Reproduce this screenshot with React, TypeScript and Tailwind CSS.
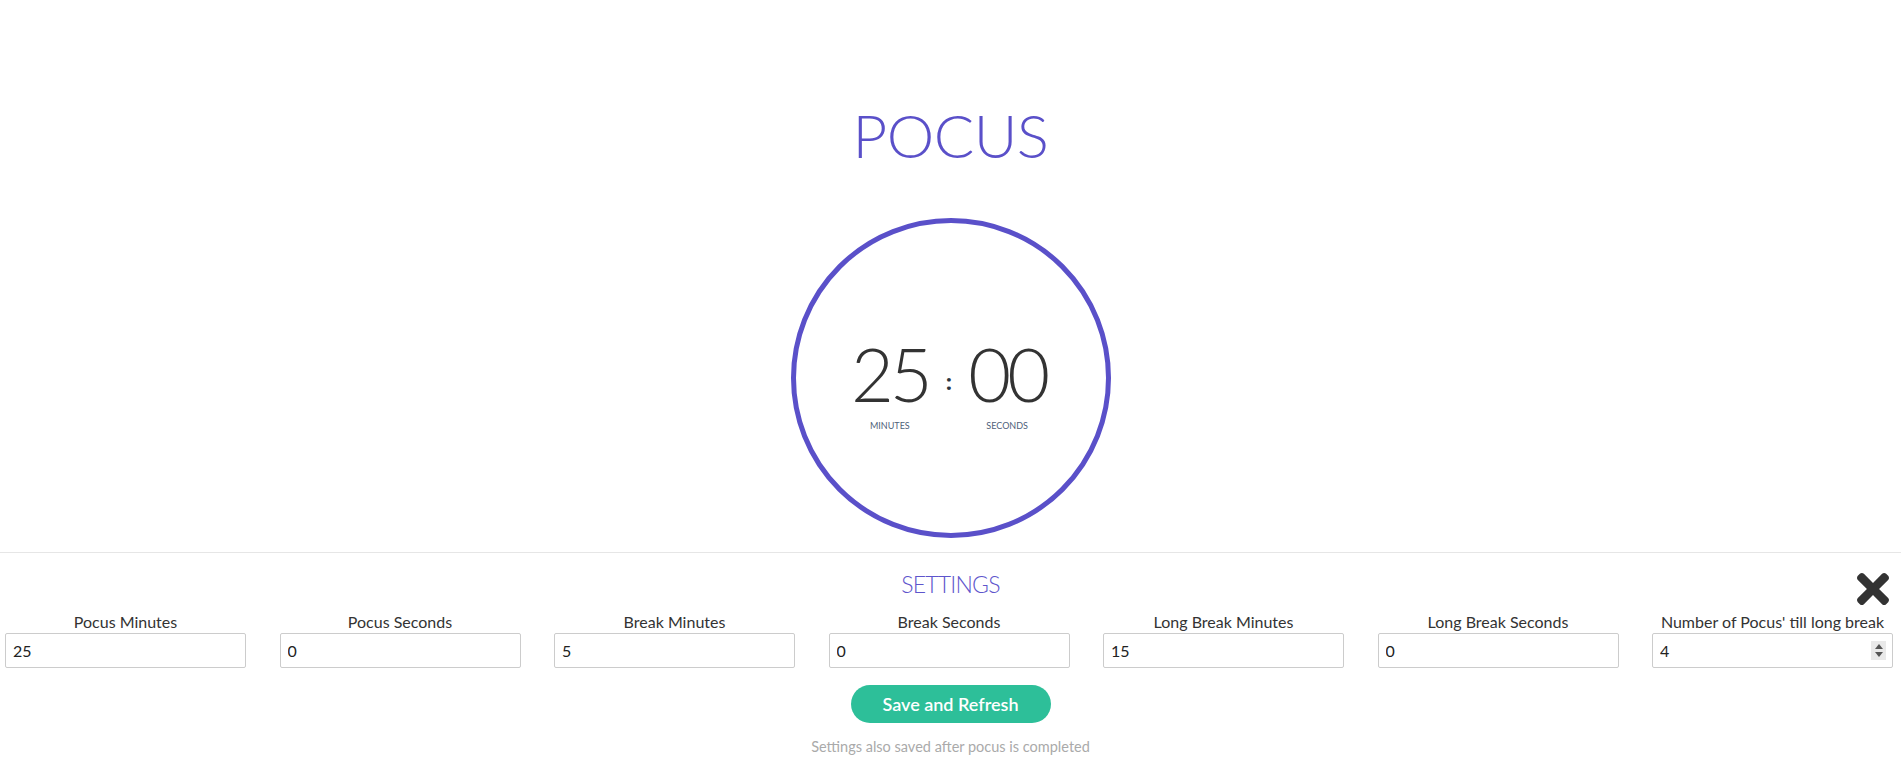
import React from "react";

const fields: { label: string; value: string }[] = [
  { label: "Pocus Minutes", value: "25" },
  { label: "Pocus Seconds", value: "0" },
  { label: "Break Minutes", value: "5" },
  { label: "Break Seconds", value: "0" },
  { label: "Long Break Minutes", value: "15" },
  { label: "Long Break Seconds", value: "0" },
  { label: "Number of Pocus' till long break", value: "4" },
];

function CloseIcon() {
  return (
    <svg width="32" height="32" viewBox="0 80 352 352" fill="#333333" aria-hidden="true">
      <path d="M242.72 256l100.07-100.07c12.28-12.28 12.28-32.19 0-44.48l-22.24-22.240c-12.28-12.28-32.19-12.28-44.48 0L176 189.28 75.93 89.21c-12.28-12.28-32.19-12.28-44.48 0L9.21 111.45c-12.28 12.28-12.28 32.19 0 44.48L109.28 256 9.21 356.07c-12.28 12.28-12.28 32.19 0 44.48l22.24 22.24c12.28 12.28 32.2 12.28 44.48 0L176 322.72l100.07 100.07c12.28 12.28 32.2 12.28 44.48 0l22.24-22.24c12.28-12.28 12.28-32.19 0-44.48L242.72 256z" />
    </svg>
  );
}

export default function App() {
  return (
    <div className="min-h-screen bg-white font-['Lato',sans-serif] text-[#333]">
      <div className="flex flex-col items-center">
        <h1 className="mt-[105px] text-[60px] leading-none font-light text-[#5a50c9] tracking-[-0.5px]">
          POCUS
        </h1>
        <div className="mt-[53px] w-[320px] h-[320px] rounded-full border-[5px] border-[#5a50c9] flex flex-col items-center pt-[114px]">
          <div className="flex items-start pr-[4px]">
            <div className="flex flex-col items-center w-[84px]">
              <div className="text-[74px] leading-none font-light tracking-[-4px] text-[#333]">25</div>
              <div className="mt-[10px] text-[9px] leading-none text-[#4f5f7a] uppercase">Minutes</div>
            </div>
            <div className="ml-[14px] mt-[33px] text-[22px] leading-none font-bold font-['Open_Sans',sans-serif] text-[#2a3440]">:</div>
            <div className="ml-[13px] flex flex-col items-center w-[84px]">
              <div className="text-[74px] leading-none font-light tracking-[-4px] text-[#333]">00</div>
              <div className="mt-[10px] text-[9px] leading-none text-[#4f5f7a] uppercase">Seconds</div>
            </div>
          </div>
        </div>
      </div>

      <div className="mt-[14px] border-t border-[#e6e6e6] relative">
        <div className="mt-[20px] text-center text-[23px] leading-none font-light tracking-[-0.8px] text-[#5e55cc]">SETTINGS</div>
        <button className="absolute right-[12px] top-[20px]" aria-label="Close settings">
          <CloseIcon />
        </button>
        <div className="mt-[18px] flex justify-between pl-[5px] pr-[8px]">
          {fields.map((f, i) => (
            <div key={f.label} className="w-[241px] flex flex-col items-center">
              <div className="text-[16px] leading-none text-[#333] mb-[3px] whitespace-nowrap">{f.label}</div>
              <div className="relative w-full">
                <input
                  type="text"
                  defaultValue={f.value}
                  className="w-full h-[35px] border border-[#cccccc] rounded-[2px] px-[7px] text-[16px] text-[#222] bg-white outline-none font-['Lato',sans-serif]"
                />
                {i === fields.length - 1 && (
                  <div className="absolute right-[7px] top-[8px] w-[15px] h-[19px] bg-[#e9e9e9] flex flex-col items-center justify-center gap-[3px]">
                    <svg width="8" height="5" viewBox="0 0 8 5"><path d="M4 0L8 5H0z" fill="#555" /></svg>
                    <svg width="8" height="5" viewBox="0 0 8 5"><path d="M0 0H8L4 5z" fill="#555" /></svg>
                  </div>
                )}
              </div>
            </div>
          ))}
        </div>
        <div className="mt-[17px] flex justify-center">
          <button className="w-[200px] h-[38px] rounded-full bg-[#2dbf99] text-white text-[18px] font-semibold leading-none">
            Save and Refresh
          </button>
        </div>
        <p className="mt-[17px] text-center text-[14.5px] leading-none text-[#aaaaaa]">
          Settings also saved after pocus is completed
        </p>
      </div>
    </div>
  );
}
